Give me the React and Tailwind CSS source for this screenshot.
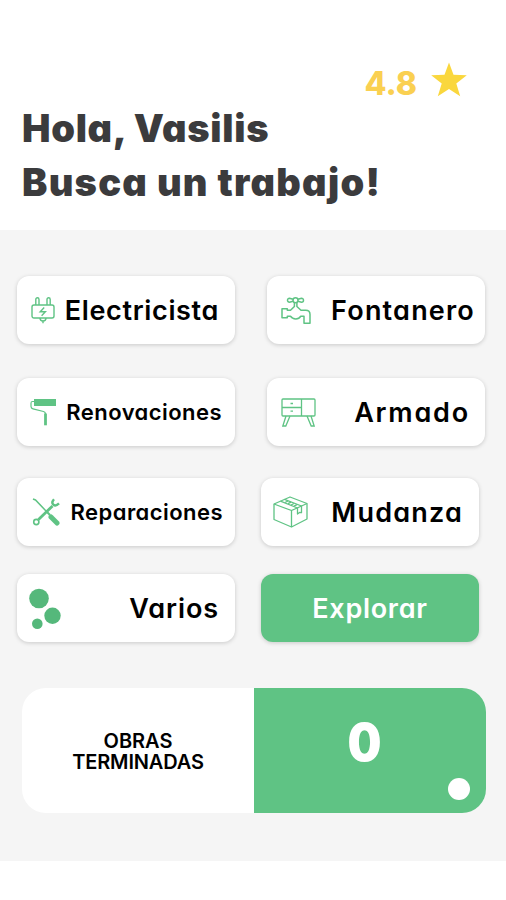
import React from "react";

const PlugIcon = () => (
  <svg width="24" height="27" viewBox="0 0 24 27" fill="none" stroke="#5fc384" strokeWidth="1.4">
    <path d="M4.800 8V2.400a1.600 1.600 0 0 1 3.200 0V8M16 8V2.400a1.600 1.600 0 0 1 3.200 0V8" />
    <rect x="1" y="8" width="22" height="13" rx="2" />
    <path d="M9 21c0 2 1 3 3 3s3-1 3-3M12 24v2.200" />
    <path d="M13.200 10.500L9.200 14.700h5.200L10.600 18.800" />
  </svg>
);

const FaucetIcon = () => (
  <svg width="30" height="27" viewBox="0 0 30 27" fill="none" stroke="#5fc384" strokeWidth="1.5" strokeLinejoin="round">
    <circle cx="14.500" cy="3.300" r="2.500" />
    <path d="M12 2.300L8.500 1.200a2 2 0 1 0 0 4L12 4.300M17 2.300l3.500-1.100a2 2 0 1 1 0 4L17 4.300" />
    <path d="M13.400 6v3.500L9.500 13.300H6.300v-1.500H1v9h5.300v-1.600h3.200c1 1.600 3 2.800 5.300 2.800s4-1.100 5-2.800h3.200v7H29v-8.700c0-2.500-1.600-4.200-4.200-4.200H20l-4.100-3.800V6" />
  </svg>
);

const RollerIcon = () => (
  <svg width="27" height="28" viewBox="0 0 27 28" fill="none" stroke="#5fc384">
    <rect x="4" y="1" width="22" height="7" fill="#5fc384" stroke="none" />
    <path d="M4 3.500H2.500C1.300 3.500 1 4.200 1 5.200v3.300c0 1.400.7 2 2 2.300l10.500 2.700c1.500.4 2 1 2 2.500" strokeWidth="1.200" />
    <path d="M15.500 15.500v11.800" strokeWidth="2.800" />
  </svg>
);

const CabinetIcon = () => (
  <svg width="35" height="29" viewBox="0 0 35 29" fill="none" stroke="#5fc384" strokeWidth="1.300">
    <rect x="1" y="1" width="33" height="17" rx="1" />
    <path d="M20.500 1v17M1 9.500h19.500M9.500 5.500h2.500M9.500 13.200h2.500" />
    <path d="M5 18L1.800 28h3L9 18M30 18l3.200 10h-3L26 18" />
  </svg>
);

const ToolsIcon = () => (
  <svg width="28" height="28" viewBox="0 0 28 28" fill="none" stroke="#5fc384">
    <path d="M1 1l2.500 1L14 13" strokeWidth="1.500" />
    <path d="M14 13l4 4" strokeWidth="2.200" />
    <path d="M19 19l6 6" strokeWidth="5" strokeLinecap="round" />
    <path d="M6.500 21.500L20.500 8" strokeWidth="2.800" />
    <circle cx="4.300" cy="24" r="2.600" strokeWidth="1.600" />
    <path d="M22 1.200c-2 2.300-1.900 4.300-.7 5.400 1.300 1.200 3.500 1 5.700-1.200" strokeWidth="2.400" />
  </svg>
);

const BoxIcon = () => (
  <svg width="35" height="32" viewBox="0 0 35 32" fill="none" stroke="#5fc384" strokeWidth="1.300" strokeLinejoin="round">
    <path d="M17 1L34 7.500v15.500L18.500 31 1 23.500V8z" />
    <path d="M1 8l17.500 6.500L34 7.500M18.500 14.500V31" />
    <path d="M7.500 5.200l17 6.800v6l2-1.500 2 .2V10L11.500 3.400" />
    <path d="M12 6.500l3-1.500M15 7.700l3-1.500M18 9l3-1.500M21 10.200l3-1.500" />
  </svg>
);

const DotsIcon = () => (
  <svg width="32" height="42" viewBox="0 0 32 42" fill="#55b87b">
    <circle cx="10" cy="11.500" r="9.800" />
    <circle cx="23.500" cy="28.800" r="8.200" />
    <circle cx="8.300" cy="36.700" r="5.300" />
  </svg>
);

const StarIcon = () => (
  <svg width="38" height="36" viewBox="0 0 38 36" fill="#fad73d">
    <path d="M19 0.500L23.500 12.800L36.800 13.200L26.300 21.500L30.200 34.300L19 26.900L7.800 34.300L11.700 21.500L1.200 13.200L14.500 12.800Z" />
  </svg>
);

const Card = ({ icon, label, className = "", textClass }) => (
  <button
    className={`flex h-[68px] w-[218px] items-center justify-between rounded-xl bg-white whitespace-nowrap text-black shadow-[0_1px_4px_rgba(0,0,0,0.18)] ${className}`}
  >
    {icon}
    <span className={textClass}>{label}</span>
  </button>
);

const App = () => {
  return (
    <div className="h-[900px] w-[506px] overflow-hidden bg-white font-['Inter',sans-serif] [font-feature-settings:'cv11']">
      <header className="h-[230px] pt-[62px]">
        <div className="flex h-[39px] items-start justify-end gap-[13px] pr-[38px] text-[#fad051]">
          <span className="pt-[6px] text-[32px] leading-8 font-extrabold">4.8</span>
          <StarIcon />
        </div>
        <h1 className="pl-[22px] text-[38px] leading-[54px] font-black whitespace-nowrap text-[#3b3b3d]">
          <span className="block tracking-[0.7px]">Hola, Vasilis</span>
          <span className="block tracking-[1.25px]">Busca un trabajo!</span>
        </h1>
      </header>

      <main className="h-[631px] bg-[#f5f5f5] pt-[46px]">
        <div className="flex gap-8 pl-[17px]">
          <Card icon={<PlugIcon />} label="Electricista" className="pr-[16px] pl-[14px]" textClass="pt-[2px] text-[27px] font-semibold tracking-[0.65px]" />
          <Card icon={<FaucetIcon />} label="Fontanero" className="pr-[10px] pl-[14px]" textClass="pt-[2px] text-[27px] font-semibold tracking-[1.2px]" />
        </div>
        <div className="mt-[34px] flex gap-8 pl-[17px]">
          <Card icon={<RollerIcon />} label="Renovaciones" className="pr-[13px] pl-[13px]" textClass="pt-px text-[22px] font-semibold tracking-[0.45px]" />
          <Card icon={<CabinetIcon />} label="Armado" className="pr-[15px] pl-[14px]" textClass="pt-[2px] text-[27px] font-semibold tracking-[1.8px]" />
        </div>
        <div className="mt-8 flex gap-[26px] pl-[17px]">
          <Card icon={<ToolsIcon />} label="Reparaciones" className="pr-[12px] pl-[15px]" textClass="pt-px text-[22px] font-semibold tracking-[0.45px]" />
          <Card icon={<BoxIcon />} label="Mudanza" className="pr-[16px] pl-[12px]" textClass="pt-[2px] text-[27px] font-semibold tracking-[1.2px]" />
        </div>
        <div className="mt-7 flex gap-[26px] pl-[17px]">
          <Card icon={<DotsIcon />} label="Varios" className="pr-[16px] pl-[12px]" textClass="pt-[2px] text-[27px] font-semibold tracking-[0.9px]" />
          <button className="h-[68px] w-[218px] rounded-xl bg-[#5fc384] pt-[2px] text-[27px] font-semibold tracking-[0.7px] text-white shadow-[0_1px_4px_rgba(0,0,0,0.18)]">
            Explorar
          </button>
        </div>

        <div className="mt-[46px] ml-[22px] flex h-[125px] w-[464px] overflow-hidden rounded-[24px]">
          <div className="flex w-[232px] flex-col items-center justify-center bg-white pt-[2px] text-[20px] leading-[21px] font-semibold text-black">
            <span>OBRAS</span>
            <span className="tracking-[-0.15px]">TERMINADAS</span>
          </div>
          <div className="flex flex-1 flex-col items-center bg-[#5fc384] pt-[28px] text-white">
            <span className="mr-[12px] scale-x-92 text-[52px] leading-[54px] font-black">0</span>
            <span className="mt-[8px] mr-4 size-[22px] self-end rounded-full bg-white" />
          </div>
        </div>
      </main>
    </div>
  );
};

export default App;
